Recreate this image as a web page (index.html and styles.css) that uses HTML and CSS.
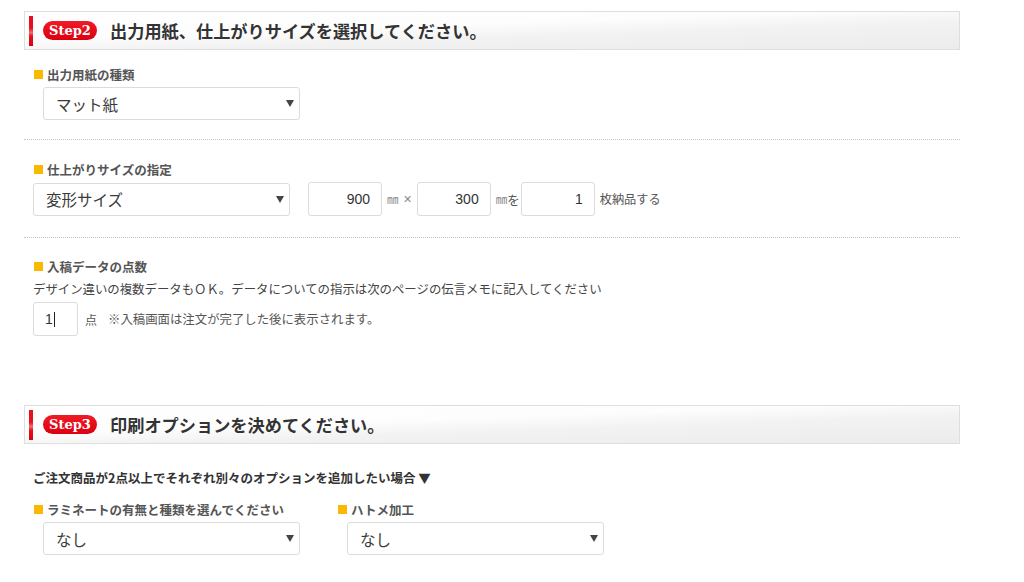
FILE: index.html
```html
<!DOCTYPE html>
<html lang="ja">
<head>
<meta charset="utf-8">
<title>Step</title>
<link rel="stylesheet" href="styles.css">
</head>
<body>
<div class="page">
  <h2 class="step-head"><span class="bar"></span><span class="badge">Step2</span><span class="title">出力用紙、仕上がりサイズを選択してください。</span></h2>

  <section class="field f1">
    <div class="label">出力用紙の種類</div>
    <div class="select indent"><span>マット紙</span><i class="arrow"></i></div>
  </section>

  <hr class="sep s1">

  <section class="field f2">
    <div class="label">仕上がりサイズの指定</div>
    <div class="size-row">
      <div class="select"><span>変形サイズ</span><i class="arrow"></i></div>
      <div class="num n1">900</div><span class="unit">㎜</span><span class="times">×</span>
      <div class="num">300</div><span class="unit">㎜</span><span class="wo">を</span>
      <div class="num n3">1</div><span class="suffix">枚納品する</span>
    </div>
  </section>

  <hr class="sep s2">

  <section class="field f3">
    <div class="label">入稿データの点数</div>
    <p class="desc">デザイン違いの複数データもＯＫ。データについての指示は次のページの伝言メモに記入してください</p>
    <div class="count-row">
      <div class="count"><span>1</span><i class="caret"></i></div>
      <span class="ten">点</span>
      <span class="note">※入稿画面は注文が完了した後に表示されます。</span>
    </div>
  </section>

  <h2 class="step-head step3"><span class="bar"></span><span class="badge">Step3</span><span class="title">印刷オプションを決めてください。</span></h2>

  <p class="intro">ご注文商品が2点以上でそれぞれ別々のオプションを追加したい場合 ▼</p>

  <div class="options">
    <div class="opt">
      <div class="label">ラミネートの有無と種類を選んでください</div>
      <div class="select indent"><span>なし</span><i class="arrow"></i></div>
    </div>
    <div class="opt">
      <div class="label">ハトメ加工</div>
      <div class="select indent"><span>なし</span><i class="arrow"></i></div>
    </div>
  </div>
</div>
</body>
</html>
```

FILE: styles.css
```css
html, body {
  margin: 0;
  padding: 0;
  background: #fff;
}

body {
  font-family: "Liberation Sans", "Noto Sans CJK JP", sans-serif;
  color: #333;
}

.page {
  width: 936px;
  margin-left: 24px;
  padding-top: 11px;
}

.step-head {
  box-sizing: border-box;
  margin: 0;
  height: 39px;
  border: 1px solid #dedede;
  background: linear-gradient(178deg, #ffffff 0%, #fdfdfd 40%, #f2f2f2 60%, #ececec 100%);
  display: flex;
  align-items: center;
  padding-left: 4px;
}

.bar {
  width: 4px;
  height: 30px;
  background: linear-gradient(to bottom, #e8101e 0%, #e8101e 40%, #f26a72 55%, #e8101e 68%, #d9000f 100%);
  margin-right: 10px;
}

.badge {
  width: 54px;
  height: 19px;
  border-radius: 10px;
  background: linear-gradient(to bottom, #f01a26, #dc0010);
  color: #fff;
  font-family: "DejaVu Serif", serif;
  font-weight: bold;
  font-size: 13px;
  line-height: 19px;
  text-align: center;
  margin-right: 13px;
}

.title {
  font-family: "Noto Sans CJK JP", sans-serif;
  font-weight: bold;
  font-size: 17.2px;
  line-height: 20px;
  color: #333;
}

.field {
  padding-left: 9px;
}

.f1 { margin-top: 15px; }
.f2 { margin-top: 20px; }
.f3 { margin-top: 19px; }

.label {
  display: flex;
  align-items: center;
  height: 18px;
  font-family: "Noto Sans CJK JP", sans-serif;
  font-size: 12.5px;
  font-weight: bold;
  color: #555;
  padding-left: 1px;
}

.label::before {
  content: "";
  width: 9px;
  height: 9px;
  background: #fbb800;
  margin-right: 4px;
  flex: none;
}

.select {
  box-sizing: border-box;
  width: 257px;
  height: 33px;
  border: 1px solid #dcdcdc;
  border-radius: 3px;
  background: #fff;
  display: flex;
  align-items: center;
  justify-content: space-between;
  padding: 0 5px 0 12px;
  margin-top: 4px;
  font-family: "Noto Sans CJK JP", sans-serif;
  font-size: 15.5px;
  color: #3a3a3a;
  flex: none;
}

.select.indent {
  margin-left: 10px;
}

.arrow {
  width: 0;
  height: 0;
  border-left: 4px solid transparent;
  border-right: 4px solid transparent;
  border-top: 7px solid #444;
}

.sep {
  margin: 0;
  border: 0;
  border-top: 1px dotted #c6c6c6;
  height: 0;
}

.s1 { margin-top: 19px; }
.s2 { margin-top: 21px; }

.size-row {
  display: flex;
  align-items: center;
  margin-top: 4px;
}

.size-row .select {
  margin-top: 0;
}

.num {
  box-sizing: border-box;
  width: 74px;
  height: 34px;
  border: 1px solid #dcdcdc;
  border-radius: 3px;
  text-align: right;
  padding-right: 11px;
  font-size: 14px;
  line-height: 32px;
  color: #333;
  flex: none;
}

.n1 { margin-left: 18px; }

.unit {
  font-family: "Noto Sans CJK JP", sans-serif;
  font-size: 11.5px;
  color: #888;
  margin-left: 5px;
}

.times {
  font-size: 14px;
  color: #888;
  margin: 0 5px 0 5px;
}

.wo {
  font-family: "Noto Sans CJK JP", sans-serif;
  font-size: 12.5px;
  color: #555;
  margin-right: 1px;
}

.suffix {
  font-family: "Noto Sans CJK JP", sans-serif;
  font-size: 12.2px;
  color: #555;
  margin-left: 5px;
}

.desc {
  margin: 5px 0 0;
  font-family: "Noto Sans CJK JP", sans-serif;
  font-size: 12.4px;
  line-height: 18px;
  color: #444;
  white-space: nowrap;
}

.count-row {
  display: flex;
  align-items: center;
  margin-top: 4px;
}

.count {
  box-sizing: border-box;
  width: 45px;
  height: 34px;
  border: 1px solid #dcdcdc;
  border-radius: 3px;
  display: flex;
  align-items: center;
  padding-left: 11px;
  font-size: 14px;
  color: #333;
}

.caret {
  width: 1px;
  height: 15px;
  background: #222;
  margin-left: 1px;
}

.ten {
  font-family: "Noto Sans CJK JP", sans-serif;
  font-size: 12px;
  color: #555;
  margin-left: 7px;
}

.note {
  font-family: "Noto Sans CJK JP", sans-serif;
  font-size: 12.4px;
  color: #555;
  margin-left: 11px;
}

.step3 {
  margin-top: 69px;
}

.intro {
  margin: 25px 0 0;
  padding-left: 9px;
  font-family: "Noto Sans CJK JP", sans-serif;
  font-size: 12.5px;
  line-height: 18px;
  font-weight: bold;
  color: #333;
}

.options {
  display: grid;
  grid-template-columns: 304px 304px;
  padding-left: 9px;
  margin-top: 13px;
}
```
